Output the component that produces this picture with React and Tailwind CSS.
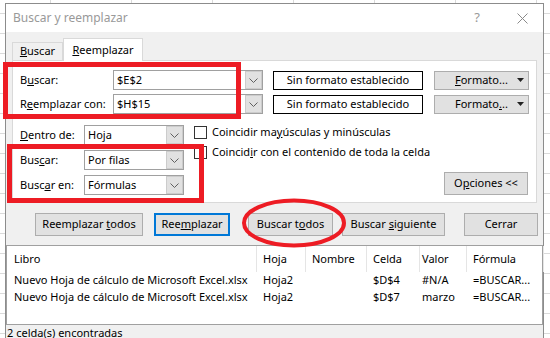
import React from 'react';

const font = "font-['Noto_Sans',sans-serif]";

function Chevron() {
    return (
        <svg width="9" height="5" viewBox="0 0 9 5">
            <polyline points="0.5,0.5 4.5,4.5 8.5,0.5" fill="none" stroke="#606060" strokeWidth="1" />
        </svg>
    );
}

function Caret() {
    return (
        <svg width="7" height="4" viewBox="0 0 7 4" className="ml-auto mr-[4px]">
            <path d="M0 0 L7 0 L3.5 4 Z" fill="#222222" />
        </svg>
    );
}

function Combo({ value, width }) {
    return (
        <div className={`flex h-[20px] shrink-0 border border-[#a0a0a0] bg-white ${width}`}>
            <div className="flex-1 pl-[3px] leading-[18px]">{value}</div>
            <div className="flex w-[17px] items-center justify-center border border-[#cccccc] bg-[#e1e1e1]">
                <Chevron />
            </div>
        </div>
    );
}

function Btn({ children, width, primary }) {
    return (
        <div
            className={`flex h-[23px] shrink-0 items-center justify-center bg-[#e1e1e1] ${width} ${
                primary ? 'border-2 border-[#0078d7]' : 'border border-[#adadad]'
            }`}
        >
            {children}
        </div>
    );
}

function Check({ children }) {
    return (
        <div className="flex h-[14px] items-center">
            <div className="h-[13px] w-[13px] shrink-0 border border-[#333333] bg-white" />
            <span className="ml-[5px]">{children}</span>
        </div>
    );
}

// columns of the results list: width, left padding of the text
const cols = [
    { w: 'w-[249px]', pl: 'pl-[7px]' },
    { w: 'w-[48px]', pl: 'pl-[6px]' },
    { w: 'w-[60px]', pl: 'pl-[6px]' },
    { w: 'w-[52px]', pl: 'pl-[6px]' },
    { w: 'w-[46px]', pl: 'pl-[2px]' },
    { w: 'w-[76px]', pl: 'pl-[6px]' },
];

function ListRow({ cells, header }) {
    return (
        <div className={`flex ${header ? 'h-[26px]' : 'h-[17px]'}`}>
            {cells.map((c, i) => (
                <React.Fragment key={i}>
                    <div className={`flex shrink-0 items-center whitespace-nowrap ${cols[i].w} ${cols[i].pl}`}>{c}</div>
                    <div className={`w-px shrink-0 ${header ? 'bg-[#e5e5e5]' : ''}`} />
                </React.Fragment>
            ))}
        </div>
    );
}

export default function App() {
    const rows = [
        ['Nuevo Hoja de cálculo de Microsoft Excel.xlsx', 'Hoja2', '', '$D$4', '#N/A', '=BUSCAR...'],
        ['Nuevo Hoja de cálculo de Microsoft Excel.xlsx', 'Hoja2', '', '$D$7', 'marzo', '=BUSCAR...'],
    ];

    return (
        <div
            className={`relative h-[338px] w-[550px] overflow-hidden bg-white bg-[image:linear-gradient(to_bottom,#dadada_1px,transparent_1px),linear-gradient(to_right,#dadada_1px,transparent_1px)] bg-size-[81px_20px] bg-position-[50px_13px] pl-[5px] pt-[3px] text-[11px] text-black ${font}`}
        >
            {/* Dialog */}
            <div className="h-[345px] w-[539px] border border-[#8c8c8c] bg-[#f0f0f0]">
                {/* Title bar */}
                <div className="flex h-[28px] items-center bg-white pl-[7px] text-[12px] text-[#999999]">
                    <span>Buscar y reemplazar</span>
                    <span className="ml-auto mr-[37px] text-[13px]">?</span>
                    <svg width="11" height="11" viewBox="0 0 11 11" className="mr-[15px]">
                        <path d="M0.5 0.5 L10.5 10.5 M10.5 0.5 L0.5 10.5" stroke="#8a8a8a" strokeWidth="1" />
                    </svg>
                </div>

                <div className="px-[6px]">
                    {/* Tabs */}
                    <div className="flex h-[28px] items-end">
                        <div className="flex h-[18px] w-[51px] items-center justify-center border border-b-0 border-[#d9d9d9]">
                            <span><u>B</u>uscar</span>
                        </div>
                        <div className="relative z-10 -mb-px flex h-[23px] w-[80px] items-center justify-center border border-b-0 border-[#d9d9d9] bg-white">
                            <span><u>R</u>eemplazar</span>
                        </div>
                    </div>

                    {/* Panel */}
                    <div className="border border-[#d9d9d9] bg-white px-[7px] pb-[7px] pt-[9px]">
                        <div className="flex h-[20px] items-center">
                            <div className="w-[93px] shrink-0">B<u>u</u>scar:</div>
                            <Combo value="$E$2" width="w-[150px]" />
                            <div className="ml-[10px] flex h-[19px] w-[150px] shrink-0 items-center justify-center border border-black">
                                Sin formato establecido
                            </div>
                            <div className="ml-[11px] flex h-[19px] w-[95px] shrink-0 items-center border border-[#adadad] bg-[#e1e1e1] pl-[20px]">
                                <span><u>F</u>ormato...</span>
                                <Caret />
                            </div>
                        </div>
                        <div className="mt-[4px] flex h-[20px] items-center">
                            <div className="w-[93px] shrink-0">R<u>e</u>emplazar con:</div>
                            <Combo value="$H$15" width="w-[150px]" />
                            <div className="ml-[10px] flex h-[19px] w-[150px] shrink-0 items-center justify-center border border-black">
                                Sin formato establecido
                            </div>
                            <div className="ml-[11px] flex h-[19px] w-[95px] shrink-0 items-center border border-[#adadad] bg-[#e1e1e1] pl-[20px]">
                                <span>Formato<u>.</u>..</span>
                                <Caret />
                            </div>
                        </div>

                        <div className="mt-[11px] flex">
                            <div className="flex flex-col gap-[5px]">
                                <div className="flex h-[20px] items-center">
                                    <div className="w-[64px] shrink-0"><u>D</u>entro de:</div>
                                    <Combo value="Hoja" width="w-[100px]" />
                                </div>
                                <div className="flex h-[20px] items-center">
                                    <div className="w-[64px] shrink-0">Bus<u>c</u>ar:</div>
                                    <Combo value="Por filas" width="w-[100px]" />
                                </div>
                                <div className="flex h-[20px] items-center">
                                    <div className="w-[64px] shrink-0">Busc<u>a</u>r en:</div>
                                    <Combo value="Fórmulas" width="w-[100px]" />
                                </div>
                            </div>
                            <div className="ml-[10px] flex flex-col gap-[6px]">
                                <Check>Coincidir ma<u>y</u>úsculas y minúsculas</Check>
                                <Check>Coincid<u>i</u>r con el contenido de toda la celda</Check>
                            </div>
                            <div className="ml-auto mr-[1px] self-end">
                                <Btn width="w-[84px]">
                                    <span>O<u>p</u>ciones &lt;&lt;</span>
                                </Btn>
                            </div>
                        </div>
                    </div>

                    {/* Buttons */}
                    <div className="mt-[10px] flex">
                        <div className="ml-[23px]">
                            <Btn width="w-[108px]"><span>Reemplazar <u>t</u>odos</span></Btn>
                        </div>
                        <div className="ml-[11px]">
                            <Btn width="w-[76px]" primary><span>Ree<u>m</u>plazar</span></Btn>
                        </div>
                        <div className="ml-[18px]">
                            <Btn width="w-[85px]"><span>Buscar t<u>o</u>dos</span></Btn>
                        </div>
                        <div className="ml-[9px]">
                            <Btn width="w-[103px]"><span>Buscar <u>s</u>iguiente</span></Btn>
                        </div>
                        <div className="ml-[19px]">
                            <Btn width="w-[74px]"><span>Cerrar</span></Btn>
                        </div>
                    </div>
                </div>

                {/* Results */}
                <div className="mt-[9px] h-[80px] border border-[#a0a0a0] bg-white">
                    <ListRow header cells={['Libro', 'Hoja', 'Nombre', 'Celda', 'Valor', 'Fórmula']} />
                    {rows.map((r, i) => (
                        <ListRow key={i} cells={r} />
                    ))}
                </div>
                <div className="flex h-[16px] items-center pl-[1px]">2 celda(s) encontradas</div>
            </div>

            {/* Red annotations */}
            <div className="absolute left-[3px] top-[62px] h-[57px] w-[238px] border-[5px] border-[#ed1c24]" />
            <div className="absolute left-[7px] top-[144px] h-[59px] w-[197px] border-[5px] border-[#ed1c24]" />
            <svg className="absolute left-[240px] top-[196px]" width="110" height="54" viewBox="0 0 110 54">
                <ellipse cx="54" cy="27" rx="50" ry="22.5" fill="none" stroke="#ed1c24" strokeWidth="4" />
            </svg>
        </div>
    );
}
